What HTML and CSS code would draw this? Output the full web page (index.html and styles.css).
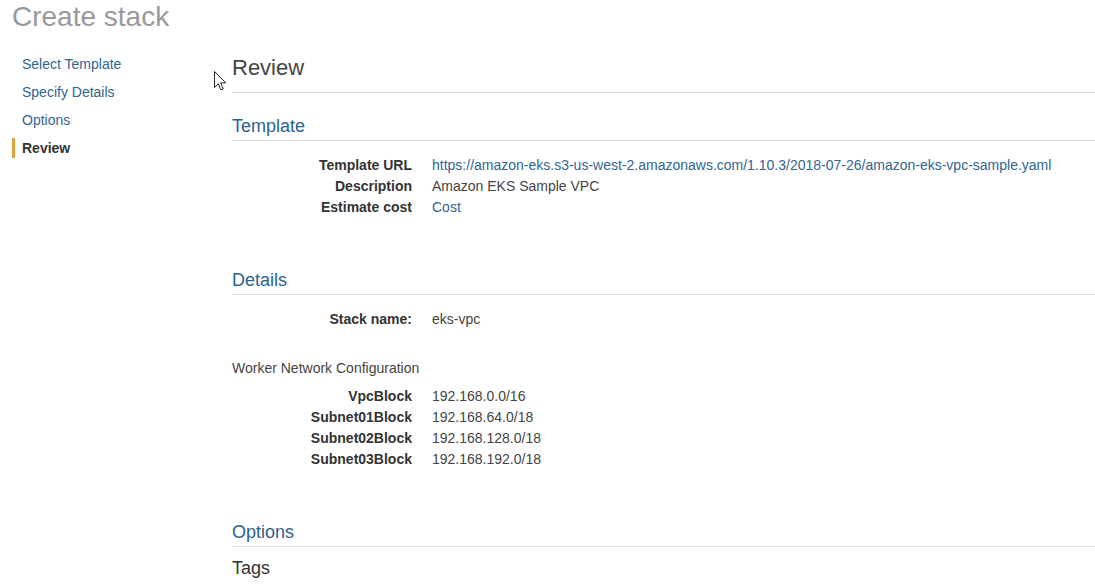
FILE: index.html
```html
<!DOCTYPE html>
<html lang="en">
<head>
<meta charset="utf-8">
<title>Create stack</title>
<link rel="stylesheet" href="styles.css">
</head>
<body>
<h1 class="page-title">Create stack</h1>
<div class="layout">
  <nav class="steps">
    <a class="step" href="#">Select Template</a>
    <a class="step" href="#">Specify Details</a>
    <a class="step" href="#">Options</a>
    <a class="step active" href="#">Review</a>
  </nav>
  <main class="content">
    <h2 class="review-title">Review</h2>

    <section class="section">
      <h3 class="section-title">Template</h3>
      <dl class="kv">
        <dt>Template URL</dt><dd><a href="#">https://amazon-eks.s3-us-west-2.amazonaws.com/1.10.3/2018-07-26/amazon-eks-vpc-sample.yaml</a></dd>
        <dt>Description</dt><dd>Amazon EKS Sample VPC</dd>
        <dt>Estimate cost</dt><dd><a href="#">Cost</a></dd>
      </dl>
    </section>

    <section class="section details">
      <h3 class="section-title">Details</h3>
      <dl class="kv">
        <dt>Stack name:</dt><dd>eks-vpc</dd>
      </dl>
      <div class="group-label">Worker Network Configuration</div>
      <dl class="kv">
        <dt>VpcBlock</dt><dd>192.168.0.0/16</dd>
        <dt>Subnet01Block</dt><dd>192.168.64.0/18</dd>
        <dt>Subnet02Block</dt><dd>192.168.128.0/18</dd>
        <dt>Subnet03Block</dt><dd>192.168.192.0/18</dd>
      </dl>
    </section>

    <section class="section options">
      <h3 class="section-title">Options</h3>
      <h4 class="sub-title">Tags</h4>
    </section>
  </main>
</div>
<svg class="cursor" width="13" height="21" viewBox="0 0 13 21" aria-hidden="true">
  <path d="M0.5 0.5 L0.5 16.5 L4.3 12.8 L6.8 18.8 L9.2 17.8 L6.7 11.9 L11.8 11.9 Z" fill="#fff" stroke="#222" stroke-width="1" stroke-linejoin="round"/>
</svg>
</body>
</html>
```

FILE: styles.css
```css
html, body {
  margin: 0;
  padding: 0;
  background: #fff;
}

body {
  font-family: "Liberation Sans", Arial, sans-serif;
  font-size: 14px;
  color: #444;
  width: 1095px;
  height: 587px;
  overflow: hidden;
  position: relative;
}

a {
  color: #2f6592;
  text-decoration: none;
}

.page-title {
  margin: 0;
  padding: 0 0 0 12px;
  font-size: 28px;
  font-weight: normal;
  line-height: 34px;
  color: #999;
}

.layout {
  display: flex;
  margin-top: 14px;
}

.steps {
  width: 232px;
  flex: none;
  display: flex;
  flex-direction: column;
  padding-top: 2px;
}

.step {
  display: block;
  line-height: 28px;
  font-size: 14px;
  color: #2f6592;
  border-left: 3px solid transparent;
  margin-left: 12px;
  padding-left: 7px;
}

.step.active {
  font-weight: bold;
  color: #333;
  border-left-color: #e3a034;
  line-height: 20px;
  margin-top: 4px;
}

.content {
  flex: 1;
  min-width: 0;
}

.review-title {
  margin: 0;
  font-size: 22px;
  font-weight: normal;
  color: #444;
  line-height: 32px;
  padding-top: 4px;
  padding-bottom: 8px;
  border-bottom: 1px solid #d5d5d5;
}

.section-title {
  margin: 0;
  font-size: 18px;
  font-weight: normal;
  color: #2c6190;
  line-height: 24px;
  padding-top: 1px;
  padding-bottom: 2px;
  border-bottom: 1px solid #e0e0e0;
}

.section {
  margin-top: 20px;
}

.section.details {
  margin-top: 49px;
}

.section.options {
  margin-top: 49px;
}

.kv {
  display: grid;
  grid-template-columns: 180px 1fr;
  column-gap: 20px;
  margin: 14px 0 0;
  line-height: 21px;
}

.kv dt {
  text-align: right;
  font-weight: bold;
  color: #333;
}

.kv dd {
  margin: 0;
  color: #444;
}

.group-label {
  margin-top: 28px;
  line-height: 21px;
  color: #444;
}

.group-label + .kv {
  margin-top: 7px;
}

.sub-title {
  margin: 9px 0 0;
  font-size: 18px;
  font-weight: normal;
  color: #333;
  line-height: 24px;
}

.cursor {
  position: absolute;
  left: 214px;
  top: 71px;
}
```
